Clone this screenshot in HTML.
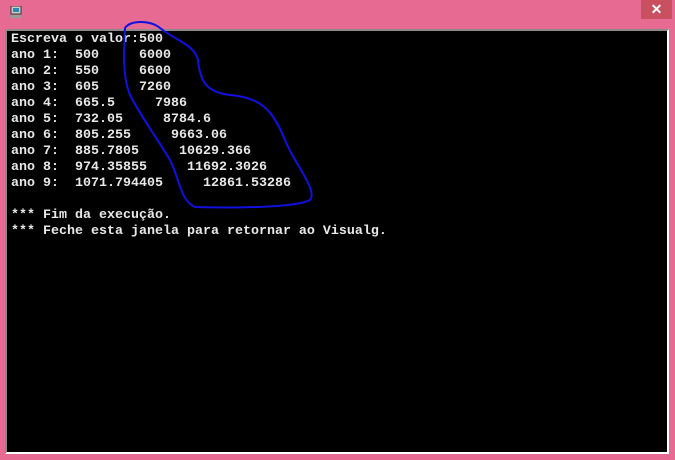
<!DOCTYPE html>
<html><head><style>
html,body{margin:0;padding:0;}
body{width:675px;height:460px;background:#e66a92;position:relative;overflow:hidden;font-family:"Liberation Mono",monospace;}
.close{position:absolute;left:641px;top:0;width:31px;height:19px;background:#c9505e;color:#fff;font:bold 14px "Liberation Sans",sans-serif;text-align:center;line-height:19px;}
.ic{position:absolute;left:9px;top:6px;width:14px;height:12px;}
.term{position:absolute;left:5px;top:29px;width:660px;height:421px;background:#000;border-top:2px solid #8a8a8a;border-left:2px solid #8a8a8a;border-right:2px solid #fff;border-bottom:2px solid #fff;}
pre{margin:0;position:absolute;left:4px;top:1px;color:#e8e8e8;font-family:"Liberation Mono",monospace;font-size:13.33px;line-height:16px;font-weight:bold;}
svg.loop{position:absolute;left:0;top:0;}
</style></head><body>
<svg class="ic" viewBox="0 0 14 12"><rect x="2" y="0" width="10" height="8" fill="#ccc" stroke="#333" stroke-width="1"/><rect x="4" y="2" width="6" height="4" fill="#2a8ab0"/><rect x="1" y="9" width="12" height="3" fill="#999"/></svg>
<div class="close">✕</div>
<div class="term"><pre>Escreva o valor:500
ano 1:  500     6000
ano 2:  550     6600
ano 3:  605     7260
ano 4:  665.5     7986
ano 5:  732.05     8784.6
ano 6:  805.255     9663.06
ano 7:  885.7805     10629.366
ano 8:  974.35855     11692.3026
ano 9:  1071.794405     12861.53286

*** Fim da execução.
*** Feche esta janela para retornar ao Visualg.</pre></div>
<svg class="loop" width="675" height="460"><path d="M125,28 C130,20 150,20 160,28 C175,40 195,45 198,60 C200,80 205,92 230,95 C260,98 272,108 285,140 C295,165 318,190 310,200 C295,208 230,208 195,207 C180,200 180,180 170,160 C155,135 140,115 130,95 C122,75 124,50 125,28 Z" fill="none" stroke="#1010e0" stroke-width="2"/></svg>
</body></html>
